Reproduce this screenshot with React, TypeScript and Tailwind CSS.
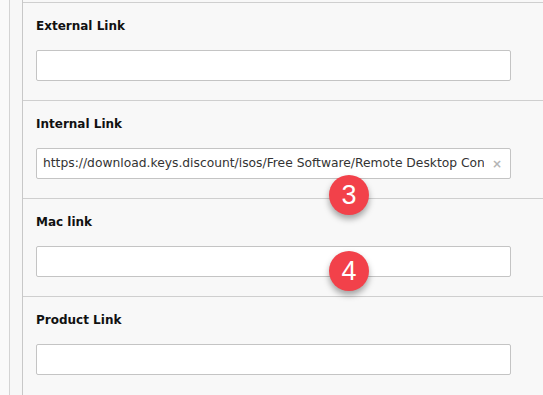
import React from 'react'

const fields = [
  { label: 'External Link', value: '' },
  {
    label: 'Internal Link',
    value:
      'https://download.keys.discount/isos/Free Software/Remote Desktop Connection Manager.msi',
  },
  { label: 'Mac link', value: '' },
  { label: 'Product Link', value: '' },
]

function Badge({ n, className }: { n: string; className: string }) {
  return (
    <div
      className={
        'absolute flex h-[40px] w-[40px] items-center justify-center rounded-full bg-[#f2414a] text-[27px] leading-none text-white shadow-[0_4px_6px_rgba(0,0,0,0.35)] ' +
        className
      }
      style={{ fontFamily: '"Liberation Sans", Arial, sans-serif' }}
    >
      {n}
    </div>
  )
}

export default function App() {
  return (
    <div
      className="relative flex h-[395px] w-[543px] overflow-hidden bg-[#fafafa]"
      style={{ fontFamily: '"DejaVu Sans", Verdana, sans-serif' }}
    >
      <div className="w-[10px] shrink-0 border-r border-[#d4d4d4]" />
      <div className="w-[13px] shrink-0 border-r border-[#c8c8c8] bg-[#f7f7f7]" />

      <main className="flex-1 bg-[#f8f8f8] pt-[2px]">
        {fields.map((f) => (
          <section
            key={f.label}
            className="h-[98px] border-t border-[#cfcfcf] pl-[13px] pt-[16px]"
          >
            <h2 className="text-[12px] leading-[15px] font-bold text-[#111]">
              {f.label}
            </h2>
            <div className="mt-[16px] flex h-[31px] w-[475px] items-center rounded-[2px] border border-[#c4c4c4] bg-white">
              {f.value && (
                <>
                  <span className="block min-w-0 flex-1 overflow-hidden whitespace-nowrap pl-[6px] text-[12.3px] text-[#333]">
                    {f.value}
                  </span>
                  <span className="w-[26px] shrink-0 text-center text-[12px] font-bold text-[#b5b5b5]">
                    ×
                  </span>
                </>
              )}
            </div>
          </section>
        ))}
      </main>

      <Badge n="3" className="left-[329px] top-[175px]" />
      <Badge n="4" className="left-[329px] top-[251px]" />
    </div>
  )
}
